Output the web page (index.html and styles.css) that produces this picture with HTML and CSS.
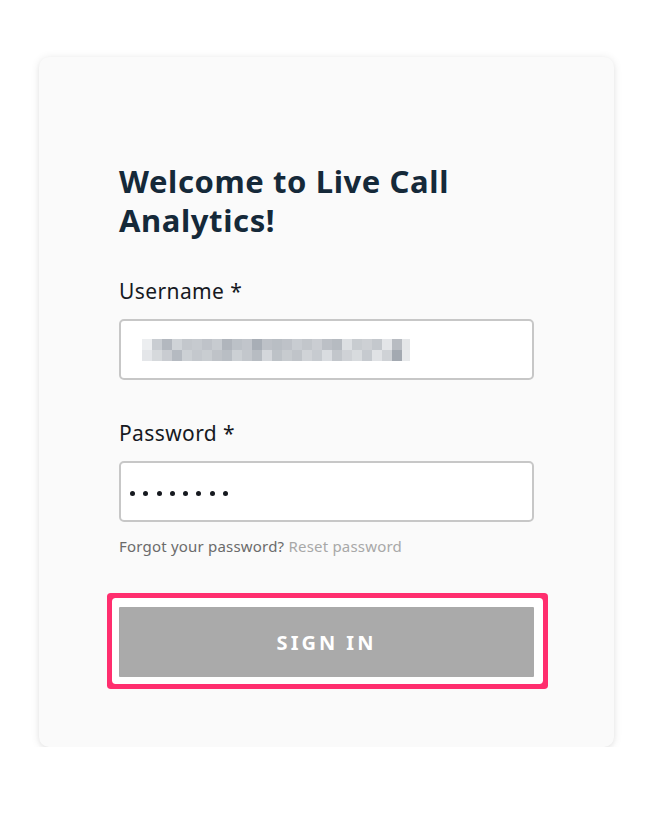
FILE: index.html
```html
<!DOCTYPE html>
<html lang="en">
<head>
<meta charset="utf-8">
<title>Live Call Analytics - Sign in</title>
<link rel="stylesheet" href="styles.css">
</head>
<body>
<main class="page">
  <section class="card">
    <h1 class="title">Welcome to Live Call Analytics!</h1>
    <div class="field">
      <label class="label">Username *</label>
      <div class="input">
        <svg class="blur" width="270" height="22" viewBox="0 0 270 22" aria-hidden="true">
          <rect x="0" y="0" width="10" height="11" fill="#eceef0"/>
          <rect x="10" y="0" width="10" height="11" fill="#c9cdd2"/>
          <rect x="20" y="0" width="10" height="11" fill="#b3b8bf"/>
          <rect x="30" y="0" width="10" height="11" fill="#cfd3d7"/>
          <rect x="40" y="0" width="10" height="11" fill="#c3c7cc"/>
          <rect x="50" y="0" width="10" height="11" fill="#c6cacf"/>
          <rect x="60" y="0" width="10" height="11" fill="#bfc3c9"/>
          <rect x="70" y="0" width="10" height="11" fill="#c7cbd0"/>
          <rect x="80" y="0" width="10" height="11" fill="#b0b5bc"/>
          <rect x="90" y="0" width="10" height="11" fill="#bcc1c7"/>
          <rect x="100" y="0" width="10" height="11" fill="#c1c5cb"/>
          <rect x="110" y="0" width="10" height="11" fill="#a8aeb6"/>
          <rect x="120" y="0" width="10" height="11" fill="#bdc1c7"/>
          <rect x="130" y="0" width="10" height="11" fill="#b9bec4"/>
          <rect x="140" y="0" width="10" height="11" fill="#bec2c8"/>
          <rect x="150" y="0" width="10" height="11" fill="#c8ccd1"/>
          <rect x="160" y="0" width="10" height="11" fill="#c2c6cb"/>
          <rect x="170" y="0" width="10" height="11" fill="#cacdd2"/>
          <rect x="180" y="0" width="10" height="11" fill="#bcc0c6"/>
          <rect x="190" y="0" width="10" height="11" fill="#b6bbc1"/>
          <rect x="200" y="0" width="10" height="11" fill="#dcdfe2"/>
          <rect x="210" y="0" width="10" height="11" fill="#c8ccd0"/>
          <rect x="220" y="0" width="10" height="11" fill="#cdd0d4"/>
          <rect x="230" y="0" width="10" height="11" fill="#c4c8cd"/>
          <rect x="240" y="0" width="10" height="11" fill="#e3e5e8"/>
          <rect x="250" y="0" width="10" height="11" fill="#b8bcc2"/>
          <rect x="260" y="0" width="8" height="11" fill="#e4e6e8"/>
          <rect x="0" y="11" width="10" height="11" fill="#e4e6e9"/>
          <rect x="10" y="11" width="10" height="11" fill="#d6d9dc"/>
          <rect x="20" y="11" width="10" height="11" fill="#c9ccd1"/>
          <rect x="30" y="11" width="10" height="11" fill="#b5bac1"/>
          <rect x="40" y="11" width="10" height="11" fill="#ccd0d4"/>
          <rect x="50" y="11" width="10" height="11" fill="#c4c8cd"/>
          <rect x="60" y="11" width="10" height="11" fill="#c9cdd1"/>
          <rect x="70" y="11" width="10" height="11" fill="#bfc3c8"/>
          <rect x="80" y="11" width="10" height="11" fill="#b9bec4"/>
          <rect x="90" y="11" width="10" height="11" fill="#ccd0d4"/>
          <rect x="100" y="11" width="10" height="11" fill="#c3c7cc"/>
          <rect x="110" y="11" width="10" height="11" fill="#b7bcc2"/>
          <rect x="120" y="11" width="10" height="11" fill="#d4d7db"/>
          <rect x="130" y="11" width="10" height="11" fill="#bdc2c7"/>
          <rect x="140" y="11" width="10" height="11" fill="#c7cbcf"/>
          <rect x="150" y="11" width="10" height="11" fill="#c0c4c9"/>
          <rect x="160" y="11" width="10" height="11" fill="#d0d3d7"/>
          <rect x="170" y="11" width="10" height="11" fill="#c7cbd0"/>
          <rect x="180" y="11" width="10" height="11" fill="#d9dce0"/>
          <rect x="190" y="11" width="10" height="11" fill="#c2c6cb"/>
          <rect x="200" y="11" width="10" height="11" fill="#cfd2d6"/>
          <rect x="210" y="11" width="10" height="11" fill="#d8dbde"/>
          <rect x="220" y="11" width="10" height="11" fill="#c6cacf"/>
          <rect x="230" y="11" width="10" height="11" fill="#e0e2e5"/>
          <rect x="240" y="11" width="10" height="11" fill="#cfd2d6"/>
          <rect x="250" y="11" width="10" height="11" fill="#a3a9b1"/>
          <rect x="260" y="11" width="8" height="11" fill="#e7e9eb"/>
        </svg>
      </div>
    </div>
    <div class="field field-password">
      <label class="label">Password *</label>
      <div class="input input-password">
        <span class="dot"></span><span class="dot"></span><span class="dot"></span><span class="dot"></span><span class="dot"></span><span class="dot"></span><span class="dot"></span><span class="dot"></span>
      </div>
    </div>
    <p class="forgot"><span class="forgot-q">Forgot your password?</span> <a class="reset">Reset password</a></p>
    <div class="actions">
      <button class="signin" type="button">SIGN IN</button>
    </div>
  </section>
</main>
</body>
</html>
```

FILE: styles.css
```css
* { box-sizing: border-box; }

html, body {
  margin: 0;
  padding: 0;
  background: #ffffff;
}

body {
  font-family: "Noto Sans", "Open Sans", "Liberation Sans", sans-serif;
  color: #16191f;
}

.page {
  padding: 57px 0 0 39px;
}

.card {
  width: 575px;
  height: 690px;
  background: #fafafa;
  border-radius: 10px;
  box-shadow: 0 1px 8px rgba(0, 0, 0, 0.10), 0 2px 4px rgba(0, 0, 0, 0.04);
  padding: 105px 80px 0 80px;
}

.title {
  margin: 0;
  font-size: 31px;
  line-height: 39px;
  font-weight: 700;
  color: #152939;
  letter-spacing: 0.6px;
  width: 360px;
}

.field {
  margin-top: 37px;
}

.field-password {
  margin-top: 39px;
}

.label {
  display: block;
  font-size: 21px;
  line-height: 28px;
  letter-spacing: 0.4px;
  color: #16191f;
  margin-bottom: 14px;
}

.input {
  height: 61px;
  background: #ffffff;
  border: 2px solid #c7c7c7;
  border-radius: 5px;
  display: flex;
  align-items: center;
  padding-left: 21px;
}

.blur {
  display: block;
  margin-top: 1px;
}

.input-password {
  padding-left: 9px;
  padding-top: 3px;
  gap: 8.3px;
}

.dot {
  width: 5px;
  height: 5px;
  border-radius: 50%;
  background: #16191f;
}

.forgot {
  margin: 14px 0 0 0;
  font-size: 15px;
  line-height: 20px;
  letter-spacing: 0.2px;
}

.forgot-q {
  color: #6b6b6b;
}

.reset {
  color: #a8a8a8;
}

.actions {
  margin-top: 51px;
}

.signin {
  display: block;
  width: 415px;
  height: 70px;
  border: none;
  background: #aaaaaa;
  color: #ffffff;
  font-family: "Noto Sans", "Open Sans", "Liberation Sans", sans-serif;
  font-size: 20px;
  font-weight: 700;
  letter-spacing: 3px;
  box-shadow: 1px -1px 0 8px #ffffff, 1px -1px 0 13px #ff2e6e;
  border-radius: 1px;
}
```
